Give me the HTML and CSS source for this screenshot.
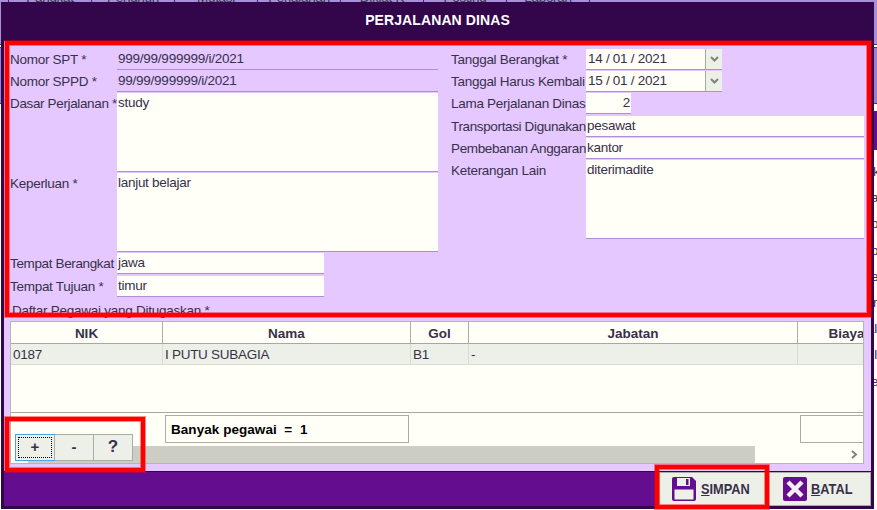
FILE: index.html
```html
<!DOCTYPE html>
<html lang="id">
<head>
<meta charset="utf-8">
<title>Perjalanan Dinas</title>
<link rel="stylesheet" href="styles.css">
</head>
<body>
<div class="backdrop">
  <div class="tabs"><span></span><span>Pangkat</span><span>Penghun</span><span>Mutasi</span><span>Perjalanan</span><span>Diklat K</span><span>Posting</span><span>Laporan</span><span></span></div>
  <div class="ribbon"></div>
  <div class="band"></div>
  <div class="gap"></div>
  <div class="strip"></div>
  <div class="list"><span class="in">k</span><span>a</span><span>p</span><span>p</span><span>e</span><span class="in">n</span><span class="out">al</span><span class="out">ul</span><span>e</span></div>
</div>

<main class="dialog">
  <header class="title">PERJALANAN DINAS</header>
  <section class="body">
    <div class="form">
      <div class="col left">
        <div class="row"><label>Nomor SPT *</label><div class="field plain">999/99/999999/i/2021</div></div>
        <div class="row"><label>Nomor SPPD *</label><div class="field plain">99/99/999999/i/2021</div></div>
        <div class="row area"><label class="tight">Dasar Perjalanan *</label><div class="field">study</div></div>
        <div class="row area"><label>Keperluan *</label><div class="field">lanjut belajar</div></div>
        <div class="row spaced"><label class="tight">Tempat Berangkat</label><div class="field place">jawa</div></div>
        <div class="row"><label>Tempat Tujuan *</label><div class="field place">timur</div></div>
        <div class="caption">Daftar Pegawai yang Ditugaskan *</div>
      </div>
      <div class="col right">
        <div class="row"><label>Tanggal Berangkat *</label><div class="field date"><span>14 / 01 / 2021</span><i><svg width="9" height="8" viewBox="0 0 9 8"><path d="M1 2 4.5 5.5 8 2" /></svg></i></div></div>
        <div class="row"><label>Tanggal Harus Kembali</label><div class="field date"><span>15 / 01 / 2021</span><i><svg width="9" height="8" viewBox="0 0 9 8"><path d="M1 2 4.5 5.5 8 2" /></svg></i></div></div>
        <div class="row spaced"><label>Lama Perjalanan Dinas</label><div class="field num">2</div></div>
        <div class="row"><label class="tight">Transportasi Digunakan</label><div class="field">pesawat</div></div>
        <div class="row"><label class="tight">Pembebanan Anggaran</label><div class="field">kantor</div></div>
        <div class="row area"><label>Keterangan Lain</label><div class="field">diterimadite</div></div>
      </div>
    </div>
    <div class="table">
      <div class="tr th"><div>NIK</div><div>Nama</div><div>Gol</div><div>Jabatan</div><div>Biaya</div></div>
      <div class="tr td"><div>0187</div><div>I PUTU SUBAGIA</div><div>B1</div><div>-</div><div></div></div>
      <div class="blank"></div>
      <div class="summary"><div class="count">Banyak pegawai&nbsp; =&nbsp; 1</div><div class="total"></div></div>
      <div class="scroll"><div class="thumb"></div><svg width="9" height="9" viewBox="0 0 9 9"><path d="M2 1 6 4.5 2 8" /></svg></div>
      <div class="tools"><button class="focus"><span>+</span></button><button>-</button><button class="help">?</button></div>
    </div>
  </section>
  <footer class="actions">
    <button class="save">
      <svg width="24" height="24" viewBox="0 0 24 24"><path d="M2 0H20L24 4V22Q24 24 22 24H2Q0 24 0 22V2Q0 0 2 0Z" fill="#650d8f"/><path d="M5 1H18V9H5Z" fill="#edf0e8"/><path d="M14 2H16.5V8H14Z" fill="#650d8f"/><path d="M2.5 12.5H21.5V22.5H2.5Z" fill="#edf0e8"/></svg>
      <span><u>S</u>IMPAN</span>
    </button>
    <button class="cancel">
      <svg width="24" height="24" viewBox="0 0 24 24"><rect width="24" height="24" rx="2" fill="#650d8f"/><path d="M5 5 19 19M19 5 5 19" stroke="#f3f0f2" stroke-width="4.4"/></svg>
      <span><u>B</u>ATAL</span>
    </button>
  </footer>
</main>
<div class="mark mark-form"></div>
<div class="mark mark-tools"></div>
<div class="mark mark-save"></div>
</body>
</html>
```
FILE: styles.css
```css
* { box-sizing: border-box; }
body {
  margin: 0;
  width: 877px;
  height: 510px;
  overflow: hidden;
  position: relative;
  background: #fff;
  color: #38304a;
  font: 13.5px/15px "Liberation Sans", Arial, sans-serif;
  letter-spacing: -.28px;
}
button { font: inherit; color: inherit; margin: 0; padding: 0; border-radius: 0; }

/* application window behind the dialog */
.backdrop { position: absolute; inset: 0; display: flex; flex-direction: column; overflow: hidden; }
.tabs { height: 2px; flex: none; display: flex; background: #a890d8; overflow: hidden; }
.tabs span { flex: none; width: 83px; height: 5px; border-right: 1px solid #650d8f; display: flex; align-items: flex-end; justify-content: center; }
.tabs span:first-child { width: 9px; }
.tabs span:last-child { border: 0; }
.ribbon { height: 42px; flex: none; background: #a890d8; }
.band { height: 60px; flex: none; background: #9a80d6; border-top: 1px solid #54306c; border-bottom: 1px solid #54306c; box-shadow: inset 0 2px #fff, inset 0 3px #54306c; }
.gap { height: 7px; flex: none; }
.strip { height: 39px; flex: none; background: #650d8f; margin-left: 1px; }
.list { display: flex; flex-direction: column; padding: 9px 0 0 871px; }
.list span { height: 26.2px; flex: none; line-height: 26px; }
.list .in { padding-left: 2px; }
.list .out { margin-left: -4px; }

.dialog {
  position: relative;
  width: 873px;
  height: 507px;
  margin: 2px 0 0 1px;
  border: 3px solid #33054b;
  border-top: 0;
  background: #e4c8ff;
  display: flex;
  flex-direction: column;
}
.title { flex: none; height: 39px; background: #33054b; color: #fff; font-weight: bold; font-size: 14px; line-height: 36px; text-align: center; letter-spacing: .1px; }
.body { flex: 1; padding: 8px 7px 0 6px; }

.form { display: flex; height: 272px; }
.col { flex: none; }
.left { width: 428px; margin-right: 13px; }
.right { width: 413px; }
.row { display: flex; height: 22px; padding-bottom: 1px; }
.row.spaced { height: 23px; padding-bottom: 2px; }
.row.area { height: 80px; }
label { position: relative; z-index: 1; flex: none; width: 107px; padding-top: 3px; white-space: nowrap; }
.right label { width: 135px; }
label.tight { letter-spacing: -.36px; }
.field { flex: 1; min-width: 0; background: #fffff8; border-bottom: 1px solid #b08cdc; padding: 2px 0 0 1px; white-space: nowrap; }
.field.plain { background: none; letter-spacing: -.24px; }
.field.place { flex: 0 0 207px; }
.field.num { flex: 0 0 45px; text-align: right; padding-right: 1px; }
.field.date { flex: 0 0 136px; display: flex; padding: 0; }
.date span { flex: 1; padding: 2px 0 0 2px; }
.date i { width: 17px; border-left: 1px solid #aaaaa2; background: #edf0e6; display: flex; align-items: center; justify-content: center; }
.date svg { fill: none; stroke: #80837a; stroke-width: 2; }
.caption { padding: 5px 0 0 2px; letter-spacing: -.25px; }

.table { position: relative; width: 854px; height: 143px; background: #fffff8; border: 1px solid #b4b7ae; overflow: hidden; display: flex; flex-direction: column; }
.tr { flex: none; display: grid; grid-template-columns: 152px 248px 58px 329px 98px; }
.tr > div { border-right: 1px solid #aaada4; }
.th { height: 22px; border-bottom: 1px solid #a6a9a0; font-weight: bold; text-align: center; line-height: 23px; letter-spacing: 0; }
.td { height: 21px; background: #edf0e8; border-bottom: 1px solid #d8ddd2; line-height: 21px; }
.td > div { padding-left: 2px; border-color: #d8ddd2; }
.blank { flex: none; height: 48px; border-bottom: 1px solid #a6a9a0; }
.summary { flex: none; height: 33px; padding: 2px 0 3px 154px; display: flex; gap: 391px; color: #000; font-weight: bold; }
.count { flex: none; width: 244px; border: 1px solid #aaada4; padding: 6px 0 0 5px; letter-spacing: .05px; }
.total { flex: none; width: 90px; border: 1px solid #aaada4; }
.scroll { flex: none; height: 17px; display: flex; align-items: center; padding-left: 17px; }
.thumb { width: 727px; height: 17px; background: #cccec5; margin-right: 95px; }
.scroll svg { fill: none; stroke: #80837a; stroke-width: 2; }
.tools { position: absolute; left: 4px; top: 112px; display: flex; width: 118px; height: 27px; }
.tools button { flex: none; width: 39px; background: #edf0e8; border: 1px solid #aaada4; border-left-width: 0; padding-bottom: 2px; font-weight: bold; font-size: 15px; line-height: 20px; display: flex; align-items: center; justify-content: center; }
.tools .focus { width: 40px; border: 1px solid #4aa3df; border-right-color: #aaada4; padding: 2px; }
.tools .help { font-size: 17px; }
.focus span { flex: 1; height: 21px; border: 1px dotted #000; line-height: 18px; }

.actions { flex: none; height: 35px; border-top: 1px solid #33054b; background: #650d8f; display: flex; justify-content: flex-end; }
.actions button { height: 34px; border: 1px solid #aaada4; background: #edf0e6; display: flex; align-items: center; gap: 5px; font-weight: bold; font-size: 14px; letter-spacing: 0; }
.actions span { transform-origin: left; transform: scaleX(.915); }
.actions .save { width: 108px; padding-left: 12px; }
.actions .cancel { width: 104px; padding-left: 15px; gap: 4px; }

/* red highlight frames */
.mark { position: absolute; border: 4px solid #f00; box-shadow: 0 0 0 1px #ff000070, inset 0 0 0 1px #ff000070; pointer-events: none; }
.mark-form { left: 5px; top: 41px; width: 866px; height: 276px; }
.mark-tools { left: 5px; top: 417px; width: 140px; height: 55px; }
.mark-save { left: 655px; top: 465px; width: 114px; height: 44px; }
```
